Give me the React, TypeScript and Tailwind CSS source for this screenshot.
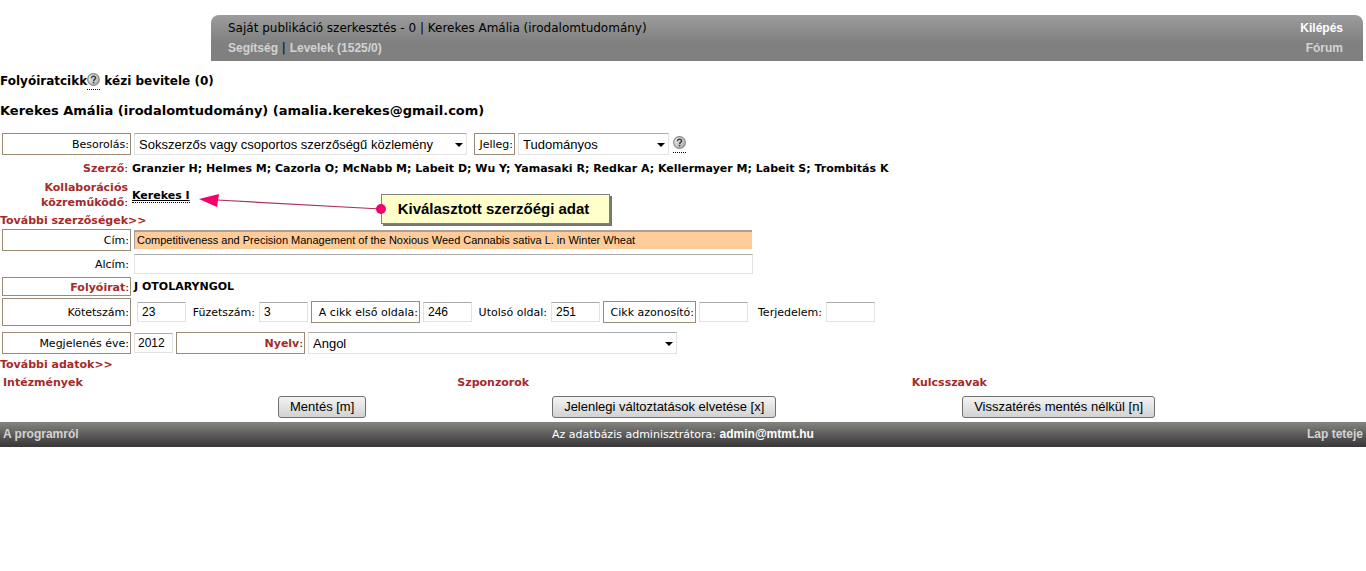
import type { InputHTMLAttributes, ReactNode } from 'react';
import { clsx } from 'clsx';

const field =
  'border border-[#e2e2e2] border-t-[#ababab] bg-white text-black outline-none';

function Help() {
  return (
    <a href="#help" aria-label="Súgó" className="inline-block h-[17px] w-[13px] border-b border-dotted border-black">
      <svg viewBox="0 0 13 13" className="block size-[13px]">
        <defs>
          <linearGradient id="helpFill" x1="0" y1="0" x2="1" y2="1">
            <stop offset="0" stopColor="#fafafa" />
            <stop offset="1" stopColor="#a4a4a4" />
          </linearGradient>
        </defs>
        <circle cx="6.5" cy="6.5" r="5.8" fill="url(#helpFill)" stroke="#858585" strokeWidth="1.2" />
        <path d="M4.4 5.2c0-1.3.9-2 2.1-2s2.1.7 2.1 1.8c0 1.4-2 1.4-2 2.9" fill="none" stroke="#3c3c3c" strokeWidth="1.4" />
        <rect x="5.8" y="8.8" width="1.5" height="1.5" fill="#3c3c3c" />
      </svg>
    </a>
  );
}

type LabelProps = { htmlFor?: string; boxed?: boolean; red?: boolean; className?: string; children: ReactNode };

function Label({ htmlFor, boxed, red, className, children }: LabelProps) {
  return (
    <label
      htmlFor={htmlFor}
      className={clsx(
        'flex shrink-0 items-center justify-end whitespace-nowrap border px-px pt-px text-right font-normal',
        boxed ? 'border-[#9b8b76]' : 'border-transparent',
        className,
      )}
    >
      <span>
        <span className={red ? 'font-bold text-[#a52a2a]' : ''}>{children}</span>:
      </span>
    </label>
  );
}

function Text({ className, ...props }: InputHTMLAttributes<HTMLInputElement>) {
  return (
    <input
      type="text"
      className={clsx(field, 'h-5 px-1 pb-px font-[Liberation_Sans,Arial,sans-serif] text-[12px]', className)}
      {...props}
    />
  );
}

function Select({ id, className, options }: { id: string; className: string; options: string[] }) {
  return (
    <span className={clsx('relative shrink-0', className)}>
      <select
        id={id}
        className={clsx(field, 'block h-[22px] w-full appearance-none pt-px pl-1 font-[Liberation_Sans,Arial,sans-serif] text-[13px] leading-5')}
      >
        {options.map((o) => (
          <option key={o}>{o}</option>
        ))}
      </select>
      <svg viewBox="0 0 8 4" className="pointer-events-none absolute right-1 top-[10px] h-1 w-2">
        <path d="M0 0h8L4 4z" />
      </svg>
    </span>
  );
}

function RedLink({ children }: { children: ReactNode }) {
  return (
    <a href="#more" className="font-bold text-[#a52a2a]">
      {children}
    </a>
  );
}

function Button({ children }: { children: ReactNode }) {
  return (
    <button
      type="button"
      className="h-[22px] rounded-[3px] border border-[#707070] bg-linear-to-b from-[#f4f4f4] to-[#d2d2d2] px-[11px] font-[Liberation_Sans,Arial,sans-serif] text-[13px] leading-5 text-black"
    >
      {children}
    </button>
  );
}

function Callout() {
  return (
    <span className="absolute left-full top-0 flex items-start">
      <svg viewBox="0 0 192 32" className="z-10 mt-px ml-[9px] h-8 w-48 shrink-0">
        <path d="M18 11L182 20" stroke="#b0305f" strokeWidth="1.2" />
        <path d="M0 10L20 5L18 18z" fill="#f5006b" />
        <circle cx="182" cy="20" r="5" fill="#f5006b" />
      </svg>
      <span className="-ml-[10px] mt-[6px] border border-[#808080] bg-[#ffffcc] pt-[3px] pr-5 pb-1 pl-4 font-[Liberation_Sans,Arial,sans-serif] text-[15px] leading-[21px] font-bold whitespace-nowrap shadow-[2px_2px_0_#777777]">
        Kiválasztott szerzőégi adat
      </span>
    </span>
  );
}

export default function App() {
  return (
    <div className="bg-white font-[DejaVu_Sans,Verdana,sans-serif] text-[11px] leading-[15px] text-black">
      <header className="mt-[15px] mr-[3px] ml-[211px] flex h-[46px] justify-between rounded-t-lg bg-linear-to-b from-[#9c9c9c] to-[#808080] to-60% pt-[3px] pr-5 pl-[17px] text-[12px] leading-5">
        <div>
          <p>Saját publikáció szerkesztés - 0 | Kerekes Amália (irodalomtudomány)</p>
          <p>
            <a href="#help" className="font-[Liberation_Sans,Arial,sans-serif] font-bold text-[#d3d3d3]">Segítség</a>
            {' | '}
            <a href="#mail" className="font-[Liberation_Sans,Arial,sans-serif] font-bold text-[#d3d3d3]">Levelek (1525/0)</a>
          </p>
        </div>
        <nav className="flex flex-col text-right font-[Liberation_Sans,Arial,sans-serif] font-bold">
          <a href="#logout" className="text-white">Kilépés</a>
          <a href="#forum" className="text-[#d3d3d3]">Fórum</a>
        </nav>
      </header>

      <h1 className="mt-3 flex h-[17px] text-[12px] leading-[17px] font-bold whitespace-pre">
        Folyóiratcikk<Help /> kézi bevitele (0)
      </h1>
      <h2 className="mt-3 text-[13px] leading-[17px] font-bold">
        Kerekes Amália (irodalomtudomány) (amalia.kerekes@gmail.com)
      </h2>

      <form onSubmit={(e) => e.preventDefault()}>
        <div className="mt-[14px] ml-[2px] flex items-start gap-[3px]">
          <Label htmlFor="type" boxed className="h-[22px] w-[129px]">Besorolás</Label>
          <Select id="type" className="w-[333px]" options={['Sokszerzős vagy csoportos szerzőségű közlemény']} />
          <Label htmlFor="kind" boxed className="ml-1 h-[22px] w-[41px]">Jelleg</Label>
          <Select id="kind" className="w-[151px]" options={['Tudományos']} />
          <span className="ml-px flex h-[22px] items-center"><Help /></span>
        </div>

        <div className="mt-[6px] flex font-bold">
          <span className="mr-1 w-32 text-right">
            <span className="text-[#a52a2a]">Szerző</span>
            <span className="font-normal">:</span>
          </span>
          <span>
            Granzier H; Helmes M; Cazorla O; McNabb M; Labeit D; Wu Y; Yamasaki R; Redkar A; Kellermayer M; Labeit S; Trombitás K
          </span>
        </div>
        <div className="mt-1 flex items-center font-bold">
          <span className="mr-1 w-32 text-right">
            <span className="block text-[#a52a2a]">Kollaborációs</span>
            <span className="text-[#a52a2a]">közreműködő</span>
            <span className="font-normal">:</span>
          </span>
          <span className="relative">
            <a href="#author" className="border-b border-dotted border-black underline">Kerekes I</a>
            <Callout />
          </span>
        </div>
        <div className="mt-[3px]"><RedLink>További szerzőségek&gt;&gt;</RedLink></div>

        <div className="mt-px ml-[2px] flex items-start gap-[3px]">
          <Label htmlFor="title" boxed className="h-[22px] w-[129px]">Cím</Label>
          <input
            id="title"
            type="text"
            defaultValue="Competitiveness and Precision Management of the Noxious Weed Cannabis sativa L. in Winter Wheat"
            className="mt-px h-[19px] w-[618px] border-t-2 border-l border-[#a9a19a] bg-[#ffcc99] pb-px pl-[2px] font-[Liberation_Sans,Arial,sans-serif] text-[11px] outline-none"
          />
        </div>
        <div className="mt-[3px] ml-[2px] flex gap-[3px]">
          <Label htmlFor="subtitle" className="h-5 w-[129px]">Alcím</Label>
          <Text id="subtitle" className="w-[619px]" />
        </div>
        <div className="mt-[3px] ml-[2px] flex items-center gap-[3px] font-bold">
          <Label boxed red className="h-[19px] w-[129px]">Folyóirat</Label>
          <span>J OTOLARYNGOL</span>
        </div>
        <div className="mt-[2px] ml-[2px] flex items-center">
          <Label htmlFor="volume" boxed className="h-7 w-[129px]">Kötetszám</Label>
          <Text id="volume" defaultValue="23" className="ml-[6px] w-[49px]" />
          <Label htmlFor="issue" className="w-[73px] pr-[3px]">Füzetszám</Label>
          <Text id="issue" defaultValue="3" className="w-[49px]" />
          <Label htmlFor="first" boxed className="mx-[3px] h-[22px] w-[109px]">A cikk első oldala</Label>
          <Text id="first" defaultValue="246" className="w-[49px]" />
          <Label htmlFor="last" className="w-[79px] pr-[3px]">Utolsó oldal</Label>
          <Text id="last" defaultValue="251" className="w-[49px]" />
          <Label htmlFor="ident" boxed className="mx-[3px] h-[22px] w-[93px]">Cikk azonosító</Label>
          <Text id="ident" className="w-[49px]" />
          <Label htmlFor="length" className="w-[78px] pr-[3px]">Terjedelem</Label>
          <Text id="length" className="w-[49px]" />
        </div>
        <div className="mt-[6px] ml-[2px] flex gap-[3px]">
          <Label htmlFor="year" boxed className="h-[22px] w-[129px]">Megjelenés éve</Label>
          <Text id="year" defaultValue="2012" className="mt-px w-[39px] px-[3px]" />
          <Label htmlFor="lang" boxed red className="h-[22px] w-[129px]">Nyelv</Label>
          <Select id="lang" className="w-[369px]" options={['Angol']} />
        </div>
        <div className="mt-[3px]"><RedLink>További adatok&gt;&gt;</RedLink></div>

        <div className="mt-[3px] grid grid-cols-3 pl-[3px]">
          <RedLink>Intézmények</RedLink>
          <RedLink>Szponzorok</RedLink>
          <RedLink>Kulcsszavak</RedLink>
        </div>

        <div className="mt-[6px] flex justify-between pr-[211px] pl-[278px]">
          <Button>Mentés [m]</Button>
          <Button>Jelenlegi változtatások elvetése [x]</Button>
          <Button>Visszatérés mentés nélkül [n]</Button>
        </div>
      </form>

      <footer className="mt-1 grid h-[25px] grid-cols-[1fr_auto_1fr] items-center bg-linear-to-b from-[#858580] to-[#383638] px-[3px] font-[Liberation_Sans,Arial,sans-serif] text-[12px] font-bold text-[#d3d3d3]">
        <a href="#about">A programról</a>
        <p className="text-white">
          <span className="font-[DejaVu_Sans,Verdana,sans-serif] text-[11px] font-normal">Az adatbázis adminisztrátora: </span>
          <a href="mailto:admin@mtmt.hu">admin@mtmt.hu</a>
        </p>
        <a href="#top" className="text-right">Lap teteje</a>
      </footer>
    </div>
  );
}
